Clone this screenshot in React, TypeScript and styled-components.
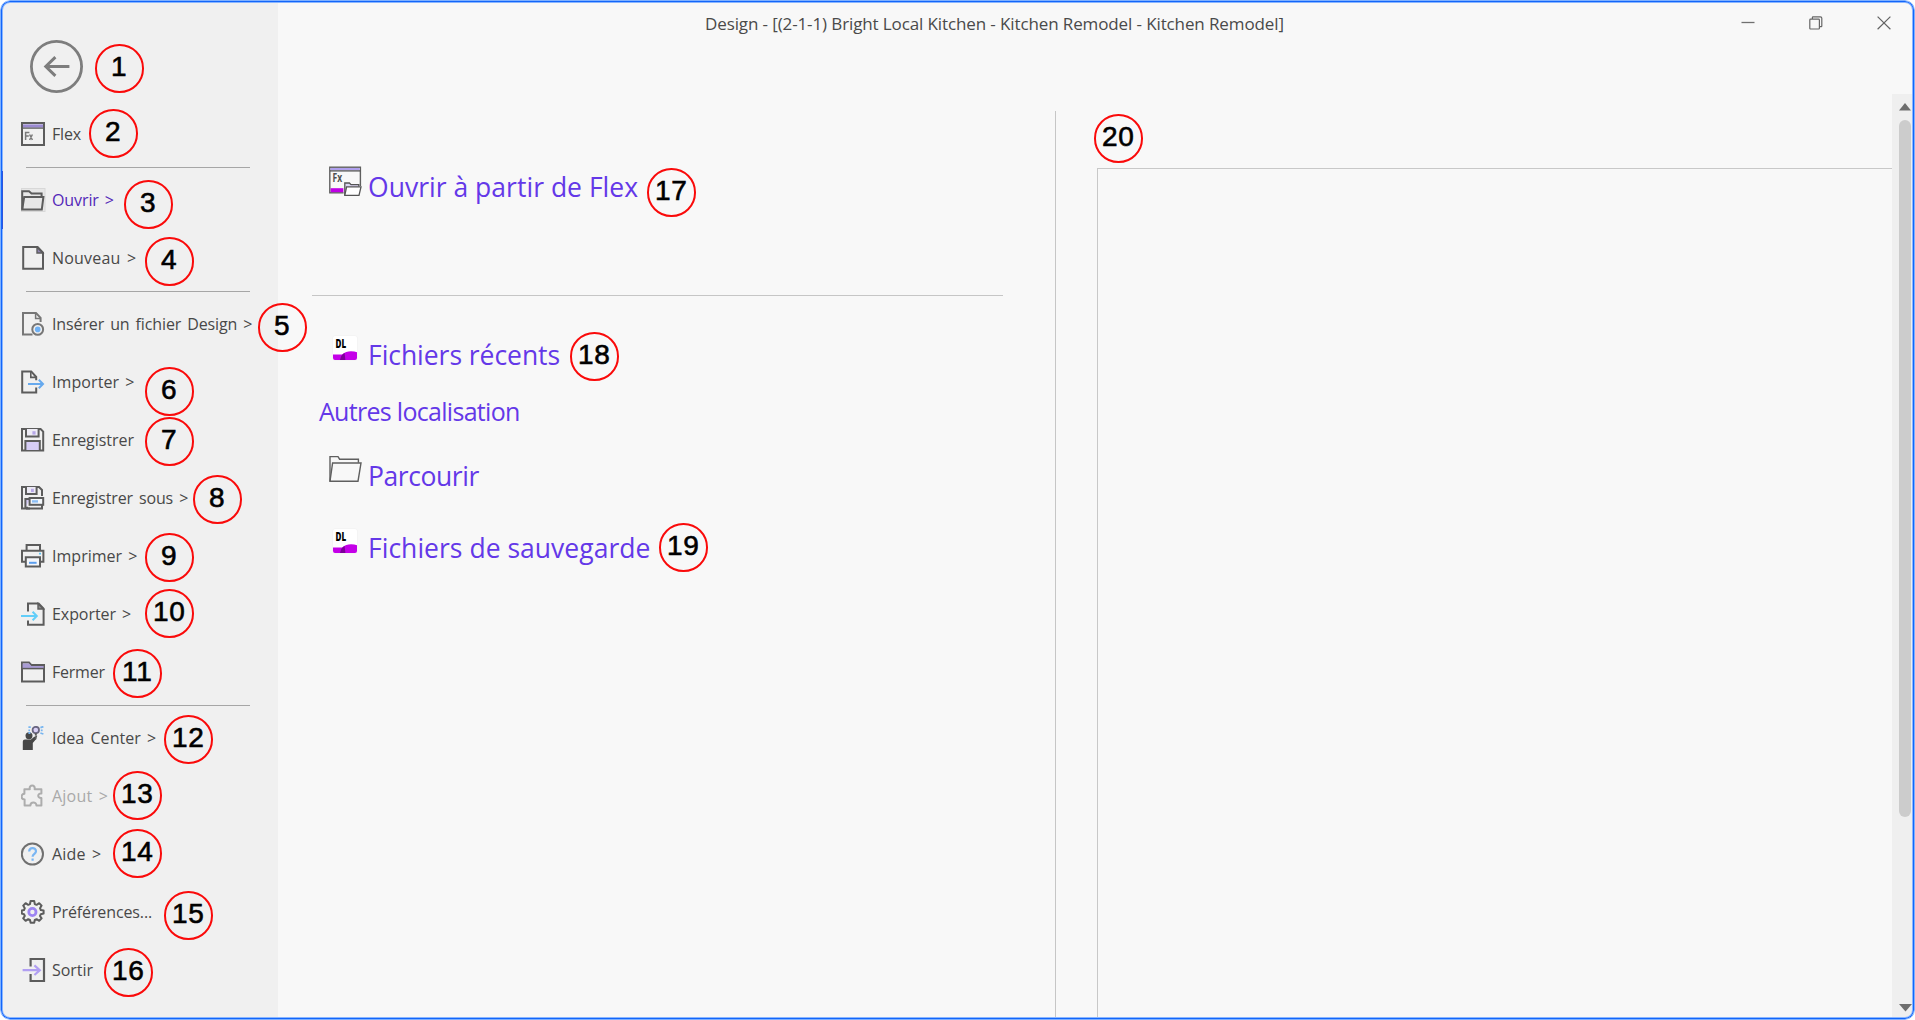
import React from 'react';
import styled, { createGlobalStyle } from 'styled-components';

const Global = createGlobalStyle`
  * { box-sizing: border-box; }
  body { margin: 0; background: #fff; font-family: "Open Sans", "Noto Sans", sans-serif; }
`;

/* ---------- window ---------- */

const Window = styled.div`
  position: relative;
  width: 1915px;
  height: 1020px;
  display: grid;
  grid-template-columns: 275px 1fr;
  padding: 3px;
  border-radius: 10px;
  overflow: hidden;
  background: #f8f8f8;
`;

const WindowOutline = styled.div`
  position: absolute;
  inset: 0;
  border: 1px solid #7fb0ff;
  border-radius: 10px;
  box-shadow: inset 0 0 0 1px #1266fa, inset 0 0 0 2px #8ab6ff;
  pointer-events: none;
`;

const Sidebar = styled.aside`
  background: #f0f0f0;
  display: flex;
  flex-direction: column;
`;

const BackRow = styled.div`
  height: 102px;
  padding: 36px 0 0 26px;
`;

const BackButton = styled.button`
  width: 55px;
  height: 55px;
  padding: 0;
  border: 0;
  background: none;
  svg { display: block; }
`;

const Item = styled.div<{ $active?: boolean; $disabled?: boolean }>`
  height: 58px;
  display: flex;
  align-items: center;
  gap: 6px;
  padding-left: 18px;
  color: ${p => (p.$active ? '#5327b8' : p.$disabled ? '#a9a9a9' : '#484848')};
  box-shadow: ${p => (p.$active ? '-1px 0 0 #2f55dc' : 'none')};
  z-index: 1;
  svg { display: block; flex: none; }
`;

const ItemLabel = styled.span<{ $ls: number }>`
  font-size: 16px;
  line-height: 24px;
  letter-spacing: ${p => p.$ls}px;
  word-spacing: 2px;
  white-space: nowrap;
`;

const Separator = styled.div`
  height: 8px;
  padding: 4px 28px 0 23px;
  &::after { content: ""; display: block; height: 1px; background: #a6a6a6; }
`;

const Main = styled.main`
  display: flex;
  flex-direction: column;
  min-width: 0;
`;

const TitleBar = styled.header`
  height: 91px;
  display: flex;
  align-items: flex-start;
  justify-content: space-between;
  padding: 9px 21px 0 427px;
`;

const Title = styled.h1`
  margin: 0;
  font-size: 17px;
  line-height: 24px;
  font-weight: 400;
  letter-spacing: -0.115px;
  color: #4a4a4a;
  white-space: nowrap;
`;

const WindowControls = styled.div`
  display: flex;
  gap: 54px;
  padding-top: 4px;
  svg { display: block; }
`;

const Body = styled.div`
  flex: 1;
  min-height: 0;
  display: flex;
`;

const Actions = styled.section`
  width: 777px;
  padding: 74px 52px 0 34px;
  display: flex;
  flex-direction: column;
`;

const Action = styled.div<{ $gap?: number }>`
  height: 36px;
  display: flex;
  align-items: center;
  gap: 6px;
  padding-left: 17px;
  margin-bottom: ${p => p.$gap ?? 0}px;
`;

const IconSlot = styled.div<{ $lift?: number }>`
  width: 33px;
  align-self: flex-start;
  display: flex;
  justify-content: center;
  margin-top: ${p => -(p.$lift ?? 0)}px;
  svg { display: block; overflow: visible; }
`;

const ActionLabel = styled.span<{ $ls: number }>`
  padding-top: 2px;
  font-size: 26.5px;
  line-height: 36px;
  letter-spacing: ${p => p.$ls}px;
  color: #6438e8;
  white-space: nowrap;
`;

const SectionTitle = styled.h2`
  margin: 0 0 28px;
  padding-left: 7px;
  font-size: 25px;
  line-height: 36px;
  font-weight: 400;
  letter-spacing: -0.7px;
  color: #6438e8;
`;

const Rule = styled.div`
  height: 1px;
  margin-bottom: 40px;
  background: #c6c6c6;
`;

const VerticalRule = styled.div`
  width: 1px;
  margin-top: 17px;
  background: #c6c6c6;
`;

const PreviewColumn = styled.section`
  flex: 1;
  display: flex;
  padding: 74px 0 0 41px;
`;

const Preview = styled.div`
  flex: 1;
  border: 1px solid #c8c8c8;
  border-width: 1px 0 0 1px;
`;

const ScrollBar = styled.div`
  width: 20px;
  background: #efefef;
  display: flex;
  flex-direction: column;
  align-items: center;
  justify-content: space-between;
  padding: 9px 0 5px 6px;
  svg { display: block; }
`;

const ScrollTrack = styled.div`
  flex: 1;
  padding-top: 9px;
`;

const ScrollThumb = styled.div`
  width: 12px;
  height: 697px;
  border-radius: 6px;
  background: #cccccc;
`;

/* Numbered callouts float above the window content. */
const Callout = styled.div<{ $x: number; $y: number }>`
  position: absolute;
  left: ${p => p.$x - 24}px;
  top: ${p => p.$y - 24}px;
  width: 48.6px;
  height: 48.6px;
  border: 2px solid #fa0a0a;
  border-radius: 50%;
  display: flex;
  justify-content: center;
  padding-top: 4px;
  font: 400 28px/34px "Liberation Sans", Arial, sans-serif;
  letter-spacing: 0.8px;
  color: #000;
  -webkit-text-stroke: 0.6px #000;
`;

/* ---------- icons ---------- */

const G = '#5c5c5c';

const Ico = ({ children }: { children: React.ReactNode }) => (
  <svg width="25" height="24" viewBox="0 0 25 24" fill="none" stroke={G} strokeWidth="2">
    {children}
  </svg>
);

const FlexIcon = () => (
  <Ico>
    <rect x="1" y="1" width="22" height="22" />
    <rect x="2" y="2.4" width="20" height="3.2" fill="#9b8ad2" stroke="none" />
    <path d="M1 6.2H23" strokeWidth="1.2" />
    <path d="M4.6 18V10.6H8.4M4.6 14H7.8M8.6 12.5L11.4 18M11.4 12.5L8.6 18" stroke="#7a7a7a" strokeWidth="1.5" />
  </Ico>
);

const OpenIcon = () => (
  <Ico>
    <rect x="0.5" y="0.5" width="23.5" height="23" fill="#e7e7e7" stroke="#d8d8d8" strokeWidth="1" />
    <path d="M1.2 21.5V3.2H8L10.5 5.4H20.6V8.8" />
    <path d="M1.2 21.6L3.2 8.9H22.4L20.8 21.6Z" />
  </Ico>
);

const NewIcon = () => (
  <Ico>
    <path d="M2.2 1H16.6L22 6.6V22.8H2.2Z" />
    <path d="M16 1.2V7H21.8Z" fill="#8d82ac" strokeWidth="1.4" />
  </Ico>
);

const InsertIcon = () => (
  <Ico>
    <path d="M11.5 22.4H2V1H15L19.6 5.8V10" stroke="#777" />
    <path d="M14.6 1V6.4H19.8" stroke="#777" strokeWidth="1.5" />
    <circle cx="16.7" cy="17.4" r="5.4" stroke="#777" strokeWidth="2" />
    <circle cx="16.7" cy="17.4" r="2.8" fill="#6fb1f5" stroke="none" />
  </Ico>
);

const ImportIcon = () => (
  <Ico>
    <path d="M15.2 17.6V22.6H1.2V1.4H10.2L15.2 7V10.2" />
    <path d="M9.8 1.6V7.4H15.4" strokeWidth="1.6" />
    <path d="M7 14H22M17.8 9.8L22 14L17.8 18.2" stroke="#66a9ee" />
  </Ico>
);

const SaveIcon = () => (
  <Ico>
    <path d="M1 1H19.6L22.2 3.6V22.4H1Z" />
    <path d="M5 1V8.6H17.6V1" fill="#efedf6" />
    <rect x="11.4" y="3.2" width="3.2" height="3.4" fill="#b7a8e8" stroke="none" />
    <path d="M4.4 22V13H18.8V22" fill="#d6cdf6" />
  </Ico>
);

const SaveAsIcon = () => (
  <Ico>
    <path d="M9 22.4H1V1H18L21 4V10" />
    <path d="M5 1V8H15.6V1" fill="#eceaf4" />
    <rect x="10" y="2.8" width="2.8" height="3.2" fill="#b7a8e8" stroke="none" />
    <path d="M4.4 22V13H9" fill="#d6cdf6" />
    <rect x="8.6" y="12" width="13.6" height="6.8" fill="#f4f8fc" />
    <path d="M11 15.4H17" stroke="#8cbff5" strokeWidth="2.4" />
    <path d="M6 20.8V22.4H21V19" />
  </Ico>
);

const PrintIcon = () => (
  <Ico>
    <path d="M5.6 6.6V1H19V6.6" />
    <path d="M5 17.8H1V6.8H22.4V17.8H18.8" />
    <path d="M4.8 13.2H19V22.6H4.8Z" fill="#f4f6fa" />
    <path d="M8 18.8H15.6" stroke="#5c9fee" />
    <path d="M18 9.6H20" stroke="#5cc3f5" strokeWidth="1.6" />
  </Ico>
);

const ExportIcon = () => (
  <Ico>
    <path d="M7 9.6V1.4H17.6L22.6 6.6V22.8H7V18.4" />
    <path d="M17 1.6V7H22.4Z" fill="#8a8a8a" strokeWidth="1.4" />
    <path d="M0 14H15.6M11.6 9.8L15.8 14L11.6 18.2" stroke="#62cef9" />
  </Ico>
);

const CloseIcon = () => (
  <Ico>
    <path d="M1 21.6V2.4H8L10.2 5H23V21.6Z" />
    <path d="M1.6 3.6H8L10.4 6H22.6V8H1.6Z" fill="#a99cd4" stroke="none" />
    <path d="M1 8.6H23" strokeWidth="1.5" />
  </Ico>
);

const IdeaIcon = () => (
  <Ico>
    <path d="M1.8 24V15.4Q1.8 13.4 4 13.4H10L13.6 10.6L15.4 12.8L11.8 17V24Z" fill="#474747" stroke="none" />
    <circle cx="8" cy="9.8" r="3.5" fill="#474747" stroke="none" />
    <path d="M14.2 13.6L15.4 9.6" stroke="#5a5a5a" strokeWidth="1.8" />
    <circle cx="14.8" cy="4" r="3.2" fill="#d9d0f6" stroke="#6a6680" strokeWidth="1.8" />
    <path d="M14.8 7V9.4" strokeWidth="2" />
    <path d="M7.4 1.2H9.8M7.4 4.4H9M7.4 7H9.4M19.4 1.6L22.4 .6M19.8 4.4H21.6M19.4 7L22.4 8" stroke="#77b5f0" strokeWidth="1.8" />
  </Ico>
);

const AddOnIcon = () => (
  <Ico>
    <path
      d="M3.4 5.2H8.8C7.6 .4 14.8 .4 13.6 5.2H20.4V9.6C16.6 8.8 15.8 14.4 20.4 14V21.4H15.4C15.6 17.6 9.4 17.6 9.4 21.4H3.6V15.6C-.4 15.6 -.4 10.2 3.4 9.8Z"
      stroke="#adadad"
      strokeLinejoin="round"
      strokeWidth="2"
    />
  </Ico>
);

const HelpIcon = () => (
  <Ico>
    <circle cx="11.4" cy="12" r="10.6" stroke="#707070" />
    <path d="M8.2 9.6C8.2 4.8 15 5.2 15 9.2C15 11.8 11.6 11.8 11.6 14.8M11.6 16.6V18.8" stroke="#7ab6f3" strokeWidth="2.2" />
  </Ico>
);

const SettingsIcon = () => (
  <Ico>
    <path
      d="M9.6 1H13.2L13.8 4L15.6 4.8L18.2 3.2L20.6 5.6L19 8.2L19.8 10L22.6 10.4V13.6L19.8 14.2L19 16L20.6 18.4L18.2 20.8L15.6 19.2L13.8 20L13.2 22.8H9.6L9 20L7.2 19.2L4.6 20.8L2.2 18.4L3.8 16L3 14.2L.8 13.6V10.4L3 10L3.8 8.2L2.2 5.6L4.6 3.2L7.2 4.8L9 4Z"
      strokeLinejoin="round"
    />
    <circle cx="11.4" cy="12" r="3.6" stroke="#9d84f2" strokeWidth="2.8" />
  </Ico>
);

const ExitIcon = () => (
  <Ico>
    <path d="M9.6 8.6V1H23V23H9.6V16" strokeWidth="2.2" />
    <path d="M1.6 12.2H18.4M13.4 7.4L18.8 12.2L13.4 17" stroke="#b19ff2" strokeWidth="2.2" />
  </Ico>
);

const BackIcon = () => (
  <svg width="55" height="55" viewBox="0 0 55 55" fill="none" stroke="#7d7d7d">
    <circle cx="27.5" cy="27.5" r="25.1" strokeWidth="2.8" />
    <path d="M40.4 27.5H17" strokeWidth="3" />
    <path d="M26.4 18.2L16.8 27.5L26.4 36.8" strokeWidth="3" />
  </svg>
);

const FlexOpenIcon = () => (
  <svg width="33" height="31" viewBox="0 0 33 31" fill="none">
    <rect x="0.8" y="1.2" width="30.6" height="25.6" fill="#f8f8f8" stroke="#5f5f5f" strokeWidth="1.4" />
    <rect x="1.5" y="2" width="29.2" height="2.2" fill="#b0a0ee" />
    <path d="M1 4.9H31.4" stroke="#555" strokeWidth="1.3" />
    <rect x="1.6" y="22.2" width="13" height="4" fill="#bf00e6" />
    <text x="3.6" y="16.4" fontFamily="Open Sans, sans-serif" fontSize="12.5" fontWeight="700" textLength="9.6" lengthAdjust="spacingAndGlyphs" fill="#505050">Fx</text>
    <path d="M14.6 16.4H20.4L22 18H30V20H33V30.5H14.6Z" fill="#f8f8f8" />
    <path d="M15.8 29.2V17H20.4L22 18.6H29.8V20.6" fill="#dcd6f2" stroke="#555" strokeWidth="1.3" />
    <path d="M15.8 29.3L17.6 20.9H32L30 29.3Z" fill="#fff" stroke="#555" strokeWidth="1.3" />
  </svg>
);

const BrowseIcon = () => (
  <svg width="33" height="28" viewBox="0 0 33 28" fill="none" stroke="#5f5f5f" strokeWidth="1.4">
    <path d="M1 26.2V1.6H9L10.6 4.2H29.4V7.8" />
    <path d="M1 26.2L3.6 8H32L29 26.2Z" />
  </svg>
);

const DesignLogo = () => (
  <svg width="25" height="24" viewBox="0 0 25 24">
    <rect x="-0.5" y="-0.5" width="25" height="25" rx="2.5" fill="#f0f0f0" />
    <rect width="24" height="24" rx="2" fill="#fff" />
    <path d="M0 18.4H9.2Q13 15.2 18 15.2Q21.6 15.2 24 16.2V22Q24 24 22 24H2Q0 24 0 22Z" fill="#c400e8" />
    <path d="M7 24Q8 18.4 11.6 17L12.4 24Z" fill="#7d0099" />
    <text x="2.6" y="12.2" fontFamily="Open Sans, sans-serif" fontSize="12" fontWeight="800" textLength="10.6" lengthAdjust="spacingAndGlyphs" fill="#000">DL</text>
  </svg>
);

/* ---------- data ---------- */

type Entry = { label: string; ls: number; icon: React.ReactNode; active?: boolean; disabled?: boolean };

const groups: Entry[][] = [
  [{ label: 'Flex', ls: -0.19, icon: <FlexIcon /> }],
  [
    { label: 'Ouvrir >', ls: -0.1, icon: <OpenIcon />, active: true },
    { label: 'Nouveau >', ls: 0.2, icon: <NewIcon /> },
  ],
  [
    { label: 'Insérer un fichier Design >', ls: -0.12, icon: <InsertIcon /> },
    { label: 'Importer >', ls: 0.08, icon: <ImportIcon /> },
    { label: 'Enregistrer', ls: -0.03, icon: <SaveIcon /> },
    { label: 'Enregistrer sous >', ls: -0.13, icon: <SaveAsIcon /> },
    { label: 'Imprimer >', ls: 0.02, icon: <PrintIcon /> },
    { label: 'Exporter >', ls: -0.06, icon: <ExportIcon /> },
    { label: 'Fermer', ls: -0.22, icon: <CloseIcon /> },
  ],
  [
    { label: 'Idea Center >', ls: 0.04, icon: <IdeaIcon /> },
    { label: 'Ajout >', ls: 0.2, icon: <AddOnIcon />, disabled: true },
    { label: 'Aide >', ls: 0.2, icon: <HelpIcon /> },
    { label: 'Préférences...', ls: -0.12, icon: <SettingsIcon /> },
    { label: 'Sortir', ls: -0.05, icon: <ExitIcon /> },
  ],
];

const callouts: [number, number][] = [
  [119, 68], [113, 133], [148, 204], [169, 261], [282, 327],
  [169, 391], [169, 441], [217, 499], [169, 557], [169, 613],
  [137, 673], [188, 739], [137, 795], [137, 853], [188, 915],
  [128, 972], [671, 192], [594, 356], [683, 547], [1118, 138],
];

export default function App() {
  return (
    <Window>
      <Global />
      <WindowOutline />
      <Sidebar>
        <BackRow>
          <BackButton><BackIcon /></BackButton>
        </BackRow>
        {groups.map((group, i) => (
          <React.Fragment key={i}>
            {i > 0 && <Separator />}
            {group.map(entry => (
              <Item key={entry.label} $active={entry.active} $disabled={entry.disabled}>
                {entry.icon}
                <ItemLabel $ls={entry.ls}>{entry.label}</ItemLabel>
              </Item>
            ))}
          </React.Fragment>
        ))}
      </Sidebar>
      <Main>
        <TitleBar>
          <Title>Design - [(2-1-1) Bright Local Kitchen - Kitchen Remodel - Kitchen Remodel]</Title>
          <WindowControls>
            <svg width="14" height="14" viewBox="0 0 14 14"><path d="M.5 6.5H13.5" stroke="#707070" strokeWidth="1.3" /></svg>
            <svg width="14" height="14" viewBox="0 0 14 14" fill="none" stroke="#666" strokeWidth="1.2">
              <path d="M3.4 3V1.4Q3.4 .8 4 .8H11.4Q12.8 .8 12.8 2.2V10Q12.8 10.6 12.2 10.6H10.6" />
              <rect x="0.8" y="3.2" width="9.6" height="9.8" rx="0.8" />
            </svg>
            <svg width="14" height="14" viewBox="0 0 14 14"><path d="M.6 .6L13.4 13.2M13.4 .6L.6 13.2" stroke="#666" strokeWidth="1.2" /></svg>
          </WindowControls>
        </TitleBar>
        <Body>
          <Actions>
            <Action $gap={91}>
              <IconSlot $lift={2}><FlexOpenIcon /></IconSlot>
              <ActionLabel $ls={0.02}>Ouvrir à partir de Flex</ActionLabel>
            </Action>
            <Rule />
            <Action $gap={21}>
              <IconSlot><DesignLogo /></IconSlot>
              <ActionLabel $ls={-0.047}>Fichiers récents</ActionLabel>
            </Action>
            <SectionTitle>Autres localisation</SectionTitle>
            <Action $gap={36}>
              <IconSlot $lift={2}><BrowseIcon /></IconSlot>
              <ActionLabel $ls={-0.42}>Parcourir</ActionLabel>
            </Action>
            <Action>
              <IconSlot><DesignLogo /></IconSlot>
              <ActionLabel $ls={0.02}>Fichiers de sauvegarde</ActionLabel>
            </Action>
          </Actions>
          <VerticalRule />
          <PreviewColumn>
            <Preview />
          </PreviewColumn>
          <ScrollBar>
            <svg width="12" height="8" viewBox="0 0 12 8"><path d="M6 0L12 7.6H0Z" fill="#6e6e6e" /></svg>
            <ScrollTrack><ScrollThumb /></ScrollTrack>
            <svg width="13" height="8" viewBox="0 0 13 8"><path d="M0 0H13L6.5 7.4Z" fill="#6e6e6e" /></svg>
          </ScrollBar>
        </Body>
      </Main>
      {callouts.map(([x, y], i) => (
        <Callout key={i} $x={x} $y={y}>{i + 1}</Callout>
      ))}
    </Window>
  );
}
